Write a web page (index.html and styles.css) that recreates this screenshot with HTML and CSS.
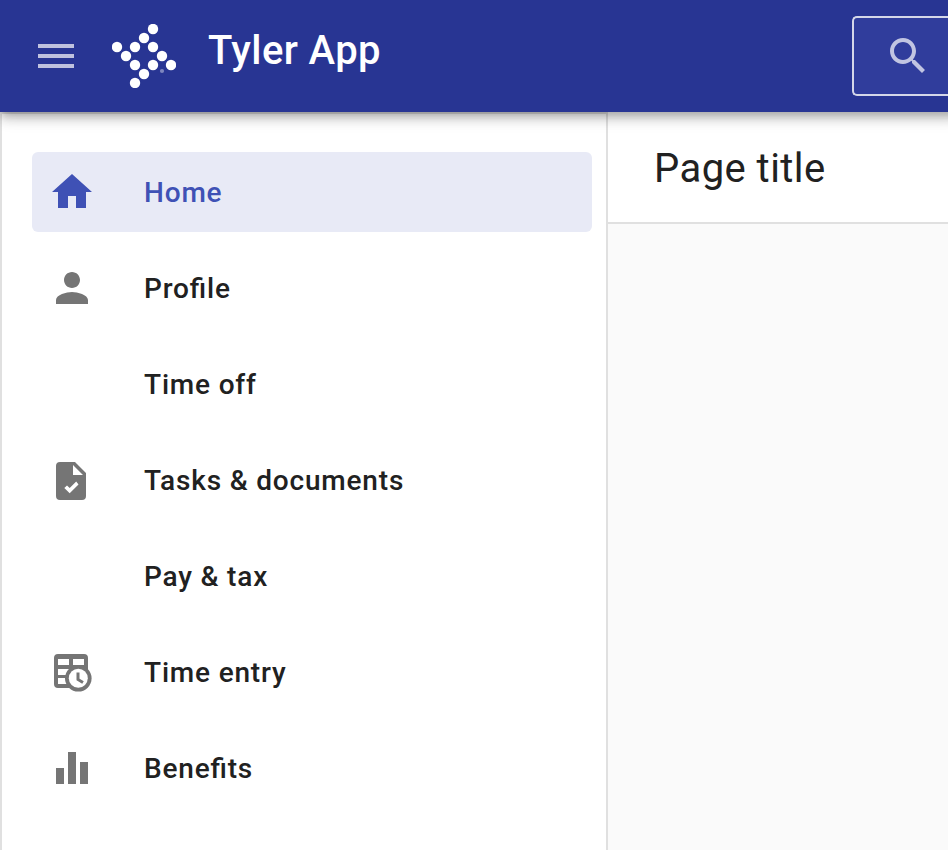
FILE: index.html
```html
<!DOCTYPE html>
<html lang="en">
<head>
<meta charset="utf-8">
<title>Tyler App</title>
<link rel="stylesheet" href="styles.css">
</head>
<body>
<header class="app-bar">
  <svg class="icon menu" viewBox="0 0 24 24"><path d="M3 18h18v-2H3v2zm0-5h18v-2H3v2zm0-7v2h18V6H3z"/></svg>
  <svg class="logo" viewBox="0 0 64 64">
    <circle cx="41" cy="5" r="5.2"/><circle cx="32" cy="14" r="5.2"/><circle cx="5" cy="23" r="5.2"/><circle cx="23" cy="23" r="5.2"/><circle cx="41" cy="23" r="5.2"/><circle cx="14" cy="32" r="5.2"/><circle cx="50" cy="32" r="5.2"/><circle cx="23" cy="41" r="5.2"/><circle cx="41" cy="41" r="5.2"/><circle cx="59" cy="41" r="5.2"/><circle cx="32" cy="50" r="5.2"/><circle cx="23" cy="59" r="5.2"/>
    <circle class="mark" cx="50" cy="47" r="2.1"/>
  </svg>
  <span class="app-title">Tyler App</span>
  <div class="search"><svg class="icon" viewBox="0 0 24 24"><path d="M15.5 14h-.79l-.28-.27C15.41 12.59 16 11.11 16 9.5 16 5.91 13.09 3 9.5 3S3 5.91 3 9.5 5.91 16 9.5 16c1.61 0 3.09-.59 4.23-1.57l.27.28v.79l5 4.99L20.49 19l-4.99-5zm-6 0C7.01 14 5 11.99 5 9.5S7.01 5 9.5 5 14 7.01 14 9.5 11.99 14 9.5 14z"/></svg></div>
</header>
<div class="layout">
  <nav class="drawer">
    <a class="item selected"><svg class="icon" viewBox="0 0 24 24"><path d="M10 20v-6h4v6h5v-8h3L12 3 2 12h3v8z"/></svg><span>Home</span></a>
    <a class="item"><svg class="icon" viewBox="0 0 24 24"><path d="M12 12c2.21 0 4-1.79 4-4s-1.79-4-4-4-4 1.79-4 4 1.79 4 4 4zm0 2c-2.67 0-8 1.34-8 4v2h16v-2c0-2.66-5.33-4-8-4z"/></svg><span>Profile</span></a>
    <a class="item"><span class="icon"></span><span>Time off</span></a>
    <a class="item"><svg class="icon" viewBox="0 0 48 48"><path fill-rule="evenodd" d="M12 6h15l11 11v23a4 4 0 0 1-4 4H12a4 4 0 0 1-4-4V10a4 4 0 0 1 4-4zm13 3v10h10zM16.3 32l5.4 5.2 8.8-8.8-2.3-2.8-6.5 6.5-2.7-2.7z"/></svg><span>Tasks &amp; documents</span></a>
    <a class="item"><span class="icon"></span><span>Pay &amp; tax</span></a>
    <a class="item"><svg class="icon" viewBox="0 0 48 48"><path fill-rule="evenodd" d="M10 6h26a4 4 0 0 1 4 4v17H26v13H10a4 4 0 0 1-4-4V10a4 4 0 0 1 4-4zm0 5v6h11v-6zm15 0v6h11v-6zM10 21v6h11v-6zm15 0v6h11v-6zM10 30v6h11v-6z"/><circle cx="30.3" cy="30.3" r="13.3"/><circle class="face" cx="30.3" cy="30.3" r="9.5"/><path class="hands" d="M30 24.5v7l5 3"/></svg><span>Time entry</span></a>
    <a class="item"><svg class="icon" viewBox="0 0 48 48"><path d="M8 24h8v16H8zM20 8h8v32h-8zM32 18h8v22h-8z"/></svg><span>Benefits</span></a>
  </nav>
  <main class="content"><h1 class="page-title">Page title</h1></main>
</div>
</body>
</html>
```
FILE: styles.css
```css
* { box-sizing: border-box; }
body {
  margin: 0;
  height: 850px;
  overflow: hidden;
  display: flex;
  flex-direction: column;
  font-family: Roboto, "Liberation Sans", sans-serif;
  color: #212121;
}
.icon { width: 48px; height: 48px; flex: none; fill: currentColor; }
.app-bar {
  position: relative;
  z-index: 1;
  flex: none;
  height: 112px;
  display: flex;
  align-items: center;
  padding-left: 32px;
  background: #283593;
  color: #fff;
  box-shadow: 6px -2px 8px 4px rgba(0,0,0,.2), 6px 2px 10px 6px rgba(0,0,0,.14), 6px -4px 20px 6px rgba(0,0,0,.12);
}
.menu { color: #bfc2df; }
.logo { width: 64px; height: 64px; margin-left: 32px; fill: #fff; flex: none; }
.mark { fill: #7e86be; }
.app-title {
  margin: -11px 0 0 32px;
  font-size: 40px;
  font-weight: 500;
  letter-spacing: .4px;
  white-space: nowrap;
}
.search {
  flex: none;
  width: 96px;
  height: 80px;
  margin-left: auto;
  padding-left: 30px;
  display: flex;
  align-items: center;
  border: 2px solid #d4d7e9;
  border-right: 0;
  border-radius: 5px 0 0 5px;
  background: #303d9c;
  color: #c1c5e2;
}
.layout { flex: 1; display: flex; min-height: 0; }
.drawer {
  width: 608px;
  flex: none;
  padding: 38px 14px 0 30px;
  border: solid #e0e0e0;
  border-width: 2px 2px 0;
  background: #fff;
}
.item {
  height: 80px;
  margin-bottom: 16px;
  padding-left: 16px;
  display: flex;
  align-items: center;
  gap: 48px;
  border-radius: 6px;
  font-size: 28px;
  font-weight: 500;
  letter-spacing: .82px;
  font-feature-settings: "liga" 1;
}
.item .icon { color: #757575; }
.selected { background: #e8eaf6; color: #3f51b5; }
.selected .icon { color: #3f51b5; }
.face { fill: #fff; }
.hands { fill: none; stroke: #757575; stroke-width: 3; }
.content { flex: 1; background: #fafafa; }
.page-title {
  margin: 0;
  height: 112px;
  padding: 1px 0 0 46px;
  border-bottom: 2px solid #e0e0e0;
  background: #fff;
  font-size: 40px;
  font-weight: 400;
  line-height: 112px;
  letter-spacing: .45px;
  white-space: nowrap;
}
```
